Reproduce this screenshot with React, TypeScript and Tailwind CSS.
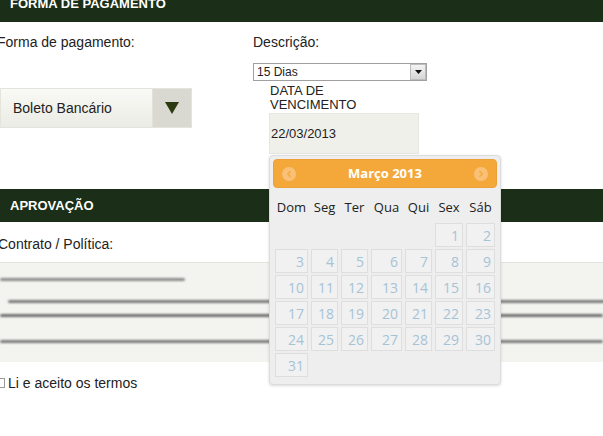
import { ChevronLeft, ChevronRight } from 'lucide-react';

const weekDays = ['Dom', 'Seg', 'Ter', 'Qua', 'Qui', 'Sex', 'Sáb'];

// Março 2013 starts on a Friday
const cells: (number | null)[] = [
  null, null, null, null, null, 1, 2,
  ...Array.from({ length: 29 }, (_, i) => i + 3),
];

function DatePicker() {
  return (
    <div className="absolute left-[269px] top-[155px] w-[232px] h-[230px] bg-[#eeeeee] border border-[#dcdcdc] rounded-[4px] shadow-[0_1px_3px_rgba(0,0,0,0.15)] p-[3px] font-['Open_Sans',sans-serif]">
      {/* Month header */}
      <div className="h-[29px] rounded-[4px] bg-[#f5a83a] border border-[#eca036] flex items-center justify-between px-[8px] text-white">
        <span className="w-[14px] h-[14px] rounded-full bg-[#f8c177] flex items-center justify-center">
          <ChevronLeft className="w-[10px] h-[10px] text-[#f5a83a]" strokeWidth={3} />
        </span>
        <span className="text-[13px] font-bold leading-none">Março 2013</span>
        <span className="w-[14px] h-[14px] rounded-full bg-[#f8c177] flex items-center justify-center">
          <ChevronRight className="w-[10px] h-[10px] text-[#f5a83a]" strokeWidth={3} />
        </span>
      </div>

      <div className="grid grid-cols-[33px_27px_27px_31px_27px_28px_29px] gap-x-[3px] gap-y-[2px] ml-[2px] mt-[6px]">
        {weekDays.map((d) => (
          <div key={d} className="h-[27px] flex items-center justify-center text-[13px] text-[#222]">
            {d}
          </div>
        ))}
        {cells.map((n, i) =>
          n === null ? (
            <div key={i} className="h-[24px]" />
          ) : (
            <div
              key={i}
              className="h-[24px] bg-[#f1f1f1] border border-[#dedede] flex items-center justify-end pr-[3px] text-[14px] font-medium text-[#a6c3d6]"
            >
              {n}
            </div>
          )
        )}
      </div>
    </div>
  );
}

export default function App() {
  return (
    <div className="relative w-[603px] h-[436px] overflow-hidden bg-white font-['Liberation_Sans',Arial,sans-serif] text-[#222]">
      {/* Forma de pagamento header */}
      <div className="h-[22px] bg-[#1b2e17] overflow-hidden">
        <div className="-mt-[4px] pl-[10px] text-[13px] leading-[16px] font-bold text-white">FORMA DE PAGAMENTO</div>
      </div>

      {/* Payment section */}
      <div className="h-[167px] flex">
        <div className="w-[253px] pt-[12px]">
          <div className="-ml-[3px] text-[14px] leading-[16px]">Forma de pagamento:</div>
          <div className="mt-[38px] w-[192px] h-[40px] flex bg-gradient-to-b from-[#f9f9f5] to-[#ececE6] border border-[#e4e4dc]">
            <div className="flex-1 flex items-center pl-[12px] text-[14px]">Boleto Bancário</div>
            <div className="w-[39px] bg-[#d9d9d1] border-l border-[#e2e2da] flex items-center justify-center">
              <svg width="14" height="12" viewBox="0 0 14 12">
                <path d="M0 0 H14 L7 12 Z" fill="#2c3a0f" />
              </svg>
            </div>
          </div>
        </div>

        <div className="flex-1 pt-[12px]">
          <div className="text-[14px] leading-[16px]">Descrição:</div>
          <div className="mt-[13px] w-[174px] h-[18px] border border-[#a0a0a0] bg-white flex items-center text-[12px]">
            <span className="flex-1 pl-[3px]">15 Dias</span>
            <span className="w-[16px] h-[16px] border border-[#bdbdbd] bg-gradient-to-b from-[#f4f4f4] to-[#d6d6d6] flex items-center justify-center">
              <svg width="7" height="4" viewBox="0 0 7 4">
                <path d="M0 0 H7 L3.5 4 Z" fill="#111" />
              </svg>
            </span>
          </div>
          <div className="ml-[17px] mt-[3px] text-[13px] leading-[14px] w-[120px]">DATA DE VENCIMENTO</div>
          <div className="ml-[16px] mt-[1px] w-[150px] h-[41px] bg-[#f0f0eb] border border-[#e6e6e0] flex items-center pl-[1px] text-[13px]">
            22/03/2013
          </div>
        </div>
      </div>

      {/* Aprovação header */}
      <div className="h-[33px] bg-[#1b2e17] flex items-center pl-[10px] text-[13px] font-bold text-white">APROVAÇÃO</div>

      <div className="pt-[14px] -ml-[2px] text-[14px] leading-[16px]">Contrato / Política:</div>

      {/* Contract text (blurred) */}
      <div className="mt-[10px] h-[100px] bg-[#f3f3ef] border-t border-[#e4e4e0]">
        <div className="pt-[15px] flex flex-col">
          <div className="w-[185px] h-[3px] bg-[#8a8a8a] blur-[1px] rounded-full" />
          <div className="ml-[8px] mt-[19px] w-[600px] h-[3px] bg-[#7a7a7a] blur-[1px] rounded-full" />
          <div className="mt-[11px] w-[603px] h-[3px] bg-[#6f6f6f] blur-[1px] rounded-full" />
          <div className="mt-[23px] w-[603px] h-[3px] bg-[#7a7a7a] blur-[1px] rounded-full" />
        </div>
      </div>

      <div className="mt-[13px] flex items-center text-[14px] leading-[16px]">
        <span className="-ml-[5px] w-[10px] h-[10px] border border-[#9a9a9a] bg-white" />
        <span className="ml-[3px]">Li e aceito os termos</span>
      </div>

      <DatePicker />
    </div>
  );
}
